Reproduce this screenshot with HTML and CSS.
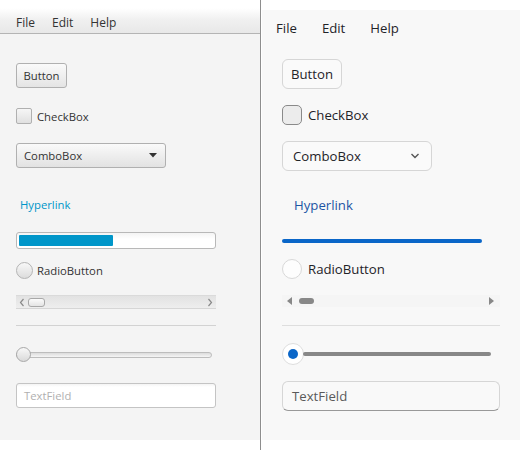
FILE: index.html
```html
<!DOCTYPE html>
<html>
<head>
<meta charset="utf-8">
<link rel="stylesheet" href="styles.css">
</head>
<body>
<div class="screen">
  <section class="modena">
    <div class="m-menubar">
      <span class="m-menu">File</span>
      <span class="m-menu">Edit</span>
      <span class="m-menu">Help</span>
    </div>
    <div class="m-content">
      <div class="m-row m-r-button"><button class="m-button">Button</button></div>
      <div class="m-row m-r-check"><span class="m-checkbox"></span><span class="m-label">CheckBox</span></div>
      <div class="m-row m-r-combo">
        <div class="m-combo"><span>ComboBox</span>
          <svg class="m-combo-arrow" width="8" height="5" viewBox="0 0 8 5"><path d="M0 0 H8 L4 4.5 Z" fill="#333"/></svg>
        </div>
      </div>
      <div class="m-row m-r-link"><span class="m-link">Hyperlink</span></div>
      <div class="m-row m-r-progress"><div class="m-progress"><div class="m-progress-fill" style="width:94px"></div></div></div>
      <div class="m-row m-r-radio"><span class="m-radio"></span><span class="m-label">RadioButton</span></div>
      <div class="m-row m-r-scroll">
        <div class="m-scroll">
          <svg class="m-sarrow" width="6" height="9" viewBox="0 0 6 9"><path d="M4.5 1 L1.5 4.5 L4.5 8" fill="none" stroke="#8a8a8a" stroke-width="1.2"/></svg>
          <span class="m-thumb"></span>
          <span class="m-sfill"></span>
          <svg class="m-sarrow" width="6" height="9" viewBox="0 0 6 9"><path d="M1.5 1 L4.5 4.5 L1.5 8" fill="none" stroke="#8a8a8a" stroke-width="1.2"/></svg>
        </div>
      </div>
      <div class="m-row m-r-sep"><div class="m-sep"></div></div>
      <div class="m-row m-r-slider"><div class="m-slider"><span class="m-strack"></span><span class="m-sthumb"></span></div></div>
      <div class="m-row m-r-text"><div class="m-text">TextField</div></div>
    </div>
  </section>
  <div class="divider"></div>
  <section class="atlanta">
    <div class="a-menubar">
      <span class="a-menu">File</span>
      <span class="a-menu">Edit</span>
      <span class="a-menu">Help</span>
    </div>
    <div class="a-content">
      <div class="a-row a-r-button"><button class="a-button">Button</button></div>
      <div class="a-row a-r-check"><span class="a-checkbox"></span><span class="a-label">CheckBox</span></div>
      <div class="a-row a-r-combo">
        <div class="a-combo"><span>ComboBox</span>
          <svg class="a-combo-arrow" width="10" height="6" viewBox="0 0 10 6"><path d="M1.5 1 L5 4.5 L8.5 1" fill="none" stroke="#555" stroke-width="1.4"/></svg>
        </div>
      </div>
      <div class="a-row a-r-link"><span class="a-link">Hyperlink</span></div>
      <div class="a-row a-r-progress"><div class="a-progress"></div></div>
      <div class="a-row a-r-radio"><span class="a-radio"></span><span class="a-label">RadioButton</span></div>
      <div class="a-row a-r-scroll">
        <div class="a-scroll">
          <svg width="6" height="8" viewBox="0 0 6 8"><path d="M5 0 V8 L0 4 Z" fill="#888"/></svg>
          <span class="a-thumb"></span>
          <span class="a-sfill"></span>
          <svg width="6" height="8" viewBox="0 0 6 8"><path d="M1 0 V8 L6 4 Z" fill="#888"/></svg>
        </div>
      </div>
      <div class="a-row a-r-sep"><div class="a-sep"></div></div>
      <div class="a-row a-r-slider"><div class="a-slider"><span class="a-sthumb"><span class="a-sdot"></span></span><span class="a-strack"></span></div></div>
      <div class="a-row a-r-text"><div class="a-text">TextField</div></div>
    </div>
  </section>
</div>
</body>
</html>
```

FILE: styles.css
```css
* { box-sizing: border-box; }
html, body { margin: 0; padding: 0; background: #ffffff; }
.screen { display: flex; width: 520px; height: 450px; }

/* ---------- Modena (left) ---------- */
.modena {
  width: 260px; height: 440px;
  background: #f4f4f4;
  font-family: "Open Sans", "Noto Sans", sans-serif;
  font-size: 11.3px; color: #333;
  display: flex; flex-direction: column;
}
.m-menubar {
  height: 34px;
  background: linear-gradient(to bottom, #ffffff 0%, #ffffff 25%, #f0f0f0 60%, #e8e8e8 100%);
  border-bottom: 1px solid #b4b4b4;
  display: flex; align-items: center;
  padding: 0 0 0 16px;
  font-size: 12px;
}
.m-menu { margin-right: 17px; padding-top: 13px; line-height: 16px; color: #333; }
.m-content { padding: 0 16px; display: flex; flex-direction: column; }
.m-row { display: flex; align-items: center; }
.m-r-button { margin-top: 29px; height: 25px; }
.m-button {
  font: inherit; color: #333;
  height: 25px; width: 51px; padding: 0;
  background: linear-gradient(to bottom, #fafafa, #e4e4e4);
  border: 1px solid #b0b0b0; border-radius: 3px;
}
.m-r-check { margin-top: 20px; height: 16px; }
.m-checkbox {
  width: 16px; height: 16px;
  border: 1px solid #b0b0b0; border-radius: 2px;
  background: linear-gradient(to bottom, #f6f6f6, #e0e0e0);
  margin-right: 5px;
}
.m-label { color: #333; }
.m-r-combo { margin-top: 19px; height: 25px; }
.m-combo {
  width: 150px; height: 25px;
  border: 1px solid #b0b0b0; border-radius: 3px;
  background: linear-gradient(to bottom, #fafafa, #e2e2e2);
  display: flex; align-items: center; justify-content: space-between;
  padding: 0 8px 0 7px; color: #333;
}
.m-r-link { margin-top: 26px; height: 20px; }
.m-link { color: #0096c9; padding-left: 4px; }
.m-r-progress { margin-top: 18px; height: 17px; }
.m-progress {
  width: 200px; height: 17px;
  border: 1px solid #b8b8b8; border-radius: 3px;
  background: linear-gradient(to bottom, #f4f4f4, #ffffff 40%, #ffffff);
  padding: 2px;
}
.m-progress-fill { height: 11px; background: #0096c9; border-radius: 1px; }
.m-r-radio { margin-top: 13px; height: 16px; }
.m-radio {
  width: 17px; height: 17px; border-radius: 50%;
  border: 1px solid #b4b4b4;
  background: linear-gradient(to bottom, #f8f8f8, #dcdcdc);
  margin-right: 4px;
}
.m-r-scroll { margin-top: 17px; height: 14px; }
.m-scroll {
  width: 200px; height: 14px;
  background: linear-gradient(to bottom, #e2e2e2, #eeeeee);
  border-top: 1px solid #dadada; border-bottom: 1px solid #d6d6d6;
  display: flex; align-items: center; padding: 0 3px 0 3px;
}
.m-sarrow { flex: none; }
.m-thumb {
  width: 17px; height: 9px; margin-left: 3px;
  border: 1px solid #a8a8a8; border-radius: 3px;
  background: linear-gradient(to bottom, #fbfbfb, #e4e4e4);
}
.m-sfill { flex: 1; }
.m-r-sep { margin-top: 16px; height: 1px; }
.m-sep { width: 200px; height: 1px; background: #d2d2d2; }
.m-r-slider { margin-top: 21px; height: 15px; }
.m-slider { position: relative; width: 196px; height: 15px; display: flex; align-items: center; }
.m-strack {
  width: 196px; height: 6px; border-radius: 3px;
  border: 1px solid #bdbdbd;
  background: linear-gradient(to bottom, #dcdcdc, #f6f6f6);
}
.m-sthumb {
  position: absolute; left: 0; top: 0;
  width: 15px; height: 15px; border-radius: 50%;
  border: 1px solid #a8a8a8;
  background: linear-gradient(to bottom, #f8f8f8, #dadada);
}
.m-r-text { margin-top: 21px; height: 25px; }
.m-text {
  width: 200px; height: 25px;
  border: 1px solid #c4c4c4; border-radius: 3px;
  background: linear-gradient(to bottom, #f4f4f4 0px, #ffffff 3px);
  color: #b0b0b0; padding: 0 7px;
  display: flex; align-items: center;
}

/* ---------- divider ---------- */
.divider { width: 1px; height: 450px; background: #8e8e8e; }

/* ---------- Atlanta (right) ---------- */
.atlanta {
  width: 258px; height: 430px;
  margin: 10px 0 0 1px;
  background: #f8f8f8;
  font-family: "Open Sans", "Noto Sans", sans-serif;
  font-size: 13.2px; color: #1f2328;
  display: flex; flex-direction: column;
}
.a-menubar { height: 36px; display: flex; align-items: center; padding: 0 0 0 14px; }
.a-menu { margin-right: 25px; line-height: 20px; padding-top: 0; }
.a-content { padding: 0 20px; display: flex; flex-direction: column; }
.a-row { display: flex; align-items: center; }
.a-r-button { margin-top: 13px; height: 30px; }
.a-button {
  font: inherit; color: #1f2328;
  width: 60px; height: 30px; padding: 0;
  background: #fafafa;
  border: 1px solid #d6d6d6; border-radius: 6px;
}
.a-r-check { margin-top: 16px; height: 20px; }
.a-checkbox {
  width: 20px; height: 20px; border-radius: 5px;
  border: 1px solid #8a8a8a; background: #ececec;
  margin-right: 6px;
}
.a-r-combo { margin-top: 16px; height: 30px; }
.a-combo {
  width: 150px; height: 30px;
  border: 1px solid #d6d6d6; border-radius: 6px;
  background: #fafafa;
  display: flex; align-items: center; justify-content: space-between;
  padding: 0 11px 0 10px;
}
.a-r-link { margin-top: 24px; height: 20px; }
.a-link { color: #1d55a4; padding-left: 12px; }
.a-r-progress { margin-top: 24px; height: 4px; }
.a-progress { width: 200px; height: 4px; border-radius: 2px; background: #0a66c8; }
.a-r-radio { margin-top: 16px; height: 20px; }
.a-radio {
  width: 20px; height: 20px; border-radius: 50%;
  border: 1px solid #d8d8d8; background: #fdfdfd;
  margin-right: 6px;
}
.a-r-scroll { margin-top: 16px; height: 12px; }
.a-scroll {
  width: 218px; height: 12px; background: #f5f5f5;
  display: flex; align-items: center; padding: 0 6px 0 5px;
}
.a-thumb { width: 15px; height: 6px; border-radius: 3px; background: #888; margin-left: 6px; }
.a-sfill { flex: 1; }
.a-r-sep { margin-top: 18px; height: 1px; }
.a-sep { width: 218px; height: 1px; background: #dedede; }
.a-r-slider { margin-top: 17px; height: 22px; }
.a-slider { width: 210px; height: 22px; display: flex; align-items: center; }
.a-sthumb {
  width: 22px; height: 22px; border-radius: 50%;
  border: 1px solid #dedede; background: #ffffff;
  display: flex; align-items: center; justify-content: center;
  flex: none;
}
.a-sdot { width: 10px; height: 10px; border-radius: 50%; background: #0a66c8; }
.a-strack { width: 188px; height: 4px; border-radius: 2px; background: #888; margin-left: -1px; }
.a-r-text { margin-top: 16px; height: 30px; }
.a-text {
  width: 218px; height: 30px;
  border: 1px solid #d6d6d6; border-bottom-color: #999;
  border-radius: 6px; background: #f9f9f9;
  color: #5a5a5a; padding: 0 9px;
  display: flex; align-items: center;
}
```
